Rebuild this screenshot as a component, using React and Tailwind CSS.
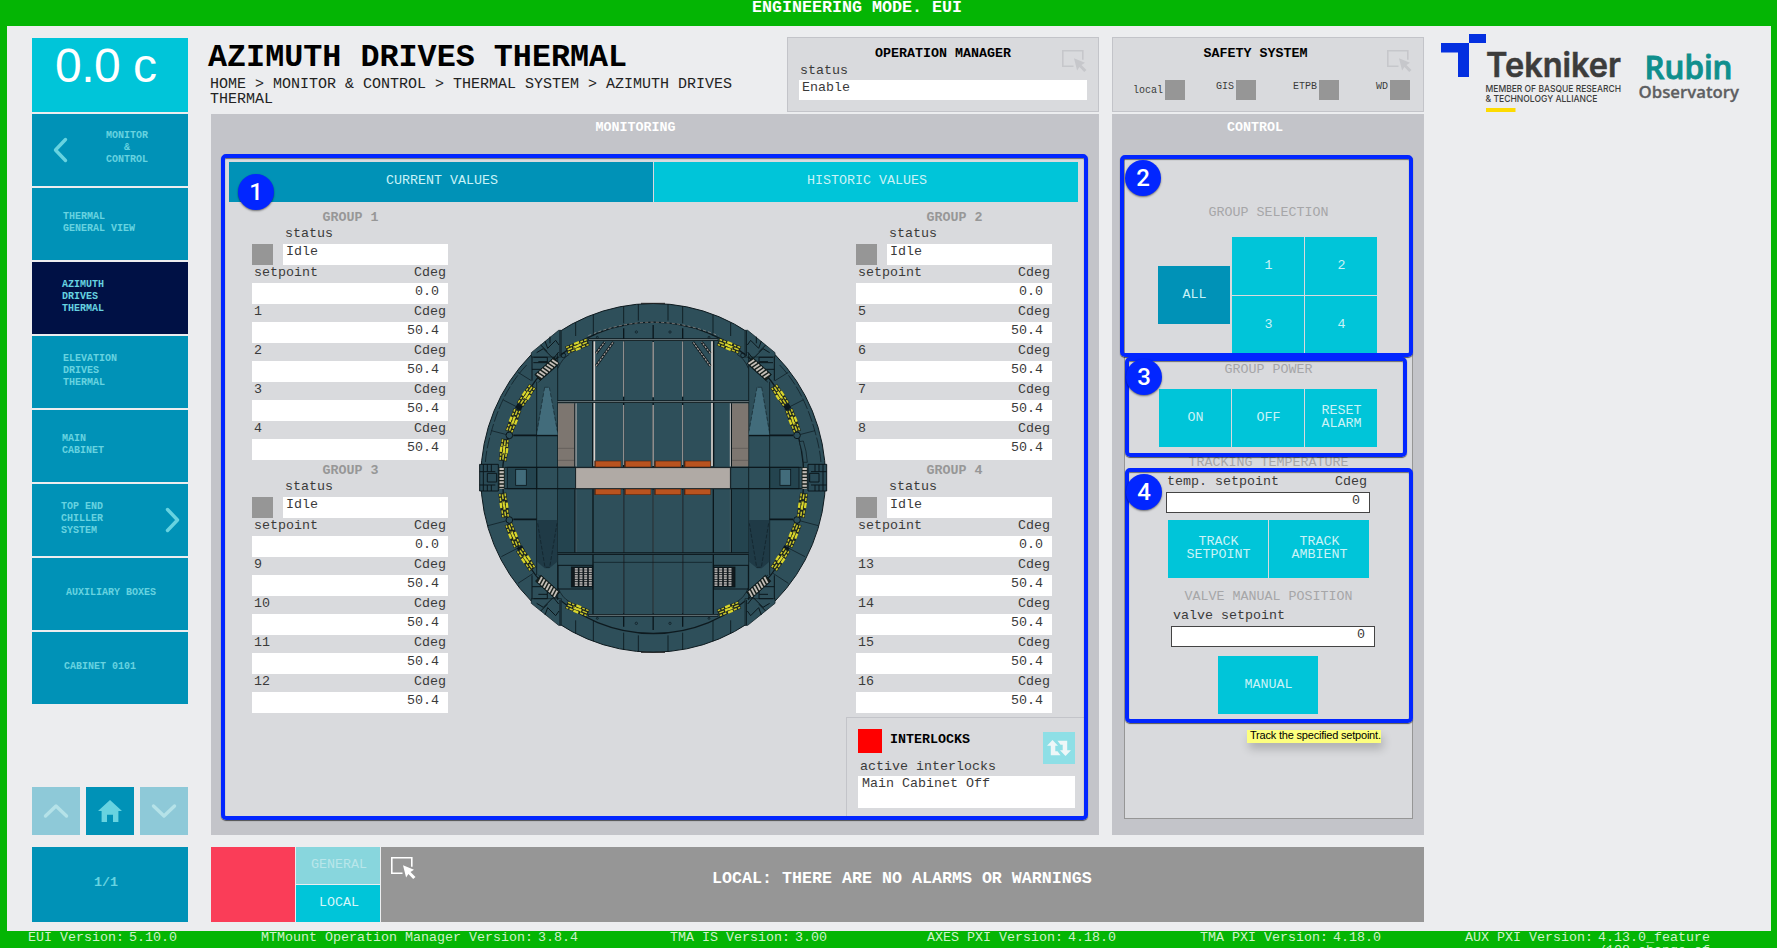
import React from "react";

const mono = "font-['Courier_New','Liberation_Mono',monospace]";

function Label({ children, className = "" }) {
  return <div className={`h-4 text-[13.33px] leading-4 whitespace-pre ${className}`}>{children}</div>;
}

function PointerIcon({ className = "" }) {
  return (
    <svg viewBox="0 0 25 22" className={`h-[22px] w-[25px] ${className}`} fill="none">
      <path d="M11.500 16.200H.8V.8h20v9" stroke="currentColor" strokeWidth="1.6" />
      <path d="M12 8.200l11 4.600-3.500 2.200 5 5-2.300 2-4.800-5-2.300 3.400z" fill="currentColor" />
    </svg>
  );
}

function Chevron({ points, size, className = "" }) {
  return (
    <svg viewBox={size} className={className} fill="none" stroke="currentColor" strokeWidth="3.4" strokeLinecap="round" strokeLinejoin="round">
      <polyline points={points} />
    </svg>
  );
}

const navItems = [
  { lines: ["THERMAL", "GENERAL VIEW"], pad: "pl-[31px]" },
  { lines: ["AZIMUTH", "DRIVES", "THERMAL"], pad: "pl-[30px]", active: true },
  { lines: ["ELEVATION", "DRIVES", "THERMAL"], pad: "pl-[31px]" },
  { lines: ["MAIN", "CABINET"], pad: "pl-[30px]" },
  { lines: ["TOP END", "CHILLER", "SYSTEM"], pad: "pl-[29px]", next: true },
  { lines: ["AUXILIARY BOXES"], pad: "pl-[34px]" },
  { lines: ["CABINET 0101"], pad: "pl-[32px]" },
];

function Sidebar() {
  return (
    <aside className="mt-3 ml-[25px] flex w-[156px] shrink-0 flex-col text-[#67d3e0]">
      <div className="h-[74px] bg-[#00c5d9] pl-[23px] font-['Liberation_Sans',sans-serif] text-[48px] leading-[56px] tracking-[-0.5px] text-white">0.0 c</div>
      <div className="mt-0.5 flex flex-col gap-0.5 text-[10px] leading-3 font-bold">
        <div className="flex h-[72px] items-center bg-[#0092b7]">
          <Chevron size="0 0 15 26" points="12.5,2.5 2.5,13 12.5,23.5" className="-mt-px ml-[21px] h-[26px] w-[15px]" />
          <div className="-mt-1 ml-[35px] w-[48px] text-center">
            MONITOR
            <br />&amp;
            <br />
            CONTROL
          </div>
        </div>
        {navItems.map((n) => (
          <div key={n.lines[0]} className={`flex h-[72px] items-center pb-[3px] ${n.pad} ${n.active ? "bg-[#001145]" : "bg-[#0092b7]"}`}>
            <div>
              {n.lines.map((l) => (
                <div key={l} className="whitespace-pre">{l}</div>
              ))}
            </div>
            {n.next && <Chevron size="0 0 15 26" points="2.5,2.5 12.5,13 2.5,23.5" className="mt-[3px] mr-2 ml-auto h-[26px] w-[15px]" />}
          </div>
        ))}
      </div>
      <div className="mt-[83px] flex gap-1.5">
        <div className="flex h-12 w-12 items-center justify-center bg-[#8ec9d8] text-[#b5e2e8]">
          <Chevron size="0 0 26 16" points="2.5,13 13,3 23.5,13" className="h-4 w-[26px]" />
        </div>
        <div className="flex h-12 w-12 items-center justify-center bg-[#0092b7]">
          <svg viewBox="0 0 24 22" className="h-[22px] w-6" fill="currentColor">
            <path d="M12 0L24 11h-3.6v11h-5.4v-7.2H9V22H3.6V11H0z" />
          </svg>
        </div>
        <div className="flex h-12 w-12 items-center justify-center bg-[#8ec9d8] text-[#b5e2e8]">
          <Chevron size="0 0 26 16" points="2.5,3 13,13 23.5,3" className="h-4 w-[26px]" />
        </div>
      </div>
      <div className="mt-3 h-[75px] bg-[#0092b7] pr-2 text-center text-[13.33px] leading-[72px] font-bold">1/1</div>
    </aside>
  );
}

const lights = [
  { name: "local", cls: "ml-[51px]", txt: "w-[32px] pt-[4px]" },
  { name: "GIS", cls: "ml-[31px]", txt: "w-[20px] pt-0" },
  { name: "ETPB", cls: "ml-[37px]", txt: "w-[26px] pt-0" },
  { name: "WD", cls: "ml-[37px]", txt: "w-[14px] pt-0" },
];

function Header() {
  return (
    <div className="flex h-[75px]">
      <div className="w-[576px] pt-[5px]">
        <h1 className="-ml-[3px] h-8 text-[31.75px] leading-8 font-bold whitespace-pre text-black">AZIMUTH DRIVES THERMAL</h1>
        <div className="mt-[3px] w-[540px] -ml-px text-[15px] leading-[15px] text-[#222]">
          HOME &gt; MONITOR &amp; CONTROL &gt; THERMAL SYSTEM &gt; AZIMUTH DRIVES THERMAL
        </div>
      </div>
      <div className="relative w-[312px] border border-[#c3c4c9] bg-[#d9dadd]">
        <Label className="mt-2 text-center font-bold text-black">OPERATION MANAGER</Label>
        <Label className="mt-[1px] pl-3">status</Label>
        <div className="mx-[11px] mt-[1px] h-5 bg-white pl-[3px] text-[13.33px] leading-4">Enable</div>
        <PointerIcon className="absolute top-3 right-[11px] text-[#c6c7cb]" />
      </div>
      <div className="relative ml-[13px] w-[312px] border border-[#c3c4c9] bg-[#d9dadd]">
        <Label className="mt-2 pr-[25px] text-center font-bold text-black">SAFETY SYSTEM</Label>
        <PointerIcon className="absolute top-3 right-[11px] text-[#c6c7cb]" />
        <div className="mt-[18px] -ml-[31px] flex text-[10px] leading-[14px]">
          {lights.map((l) => (
            <div key={l.name} className={`flex ${l.cls}`}>
              <div className={l.txt}>{l.name}</div>
              <div className="h-5 w-5 bg-[#969696]" />
            </div>
          ))}
        </div>
      </div>
    </div>
  );
}

const fmt = (n) => n.toFixed(1);

function Group({ id, start }) {
  const rows = [["setpoint", 0], [start, 50.4], [start + 1, 50.4], [start + 2, 50.4], [start + 3, 50.4]];
  return (
    <section className="w-[196px]">
      <Label className="pl-px text-center font-bold text-[#979797]">GROUP {id}</Label>
      <Label className="h-[18px] pl-[33px]">status</Label>
      <div className="flex justify-between">
        <div className="h-[21px] w-[21px] bg-[#969696]" />
        <div className="h-[21px] w-[165px] bg-white pl-[3px] text-[13.33px] leading-4">Idle</div>
      </div>
      {rows.map(([name, v]) => (
        <div key={name}>
          <Label className="flex h-[18px] justify-between px-0.5">
            <span>{name}</span>
            <span>Cdeg</span>
          </Label>
          <div className="h-[21px] bg-white pr-[9px] text-right text-[13.33px] leading-[18px]">{fmt(v)}</div>
        </div>
      ))}
    </section>
  );
}

function Drive({ x, y, r, w = 68 }) {
  return (
    <g transform={`translate(${x} ${y}) rotate(${r})`}>
      <rect x={-w / 2} y="-12" width={w} height="24" fill="#1b2520" stroke="none" />
      <path
        d={`M${-w / 2 + 2} -8h9M${-w / 2 + 15} -8h7M${-w / 2 + 4} 0h14M${-w / 2 + 2} 8h7M${-w / 2 + 13} 8h10M${w / 2 - 22} -8h8M${w / 2 - 10} -8h8M${w / 2 - 18} 0h14M${w / 2 - 23} 8h10M${w / 2 - 9} 8h7`}
        stroke="#c9c62c"
        strokeWidth="4.500"
      />
      <path d="M-13 0h26M-7 -9h16M-9 9h16" stroke="#d9d62c" strokeWidth="7" />
      <path d="M-5 -4h6M3 4h6M-11 -2v5" stroke="#1b2520" strokeWidth="2" />
    </g>
  );
}

function Ladder({ x, y, r, w = 76 }) {
  return (
    <g transform={`translate(${x} ${y}) rotate(${r})`}>
      <rect x={-w / 2} y="-12" width={w} height="24" fill="#17201c" />
      {[0, 1, 2, 3, 4, 5, 6].map((i) => (
        <path key={i} d={`M${-w / 2 + 6 + (i * w) / 7.4} -10l5 20`} stroke="#c4beb8" strokeWidth="5.5" />
      ))}
    </g>
  );
}

function HalfMount() {
  return (
    <g stroke="#0b171c" strokeWidth="2.5" fill="none">
      <path d="M184 188L266 121h8v80H184z" fill="#2e4f5a" stroke="#16262c" />
      <path d="M184 940L266 1006h8v-80H184z" fill="#2e4f5a" stroke="#16262c" />
      <path d="M317 98v40M370 75v62M461 48v52M505 42v50M317 1031v-40M370 1054v-62M461 1080v-52M505 1086v-50" />
      <path d="M186 200v72M186 856v72M190 202h42v36h-46M200 188l20-12 30 30 16-20M212 165l20 20M225 153l8 22 24-24 10 14M240 140v20M205 215h26M190 218h42M270 122v76M190 926h42v-36h-46M200 940l20 12 30-30 16 20M212 963l20-20M225 975l8-22 24 24 10-14M205 913h26M270 1006v-76" strokeWidth="3" />
      <path d="M184 272l-40-25M155 358l-55-28M118 436l-54-14M118 690l-64 17M148 772l-54 28M190 850l-46 30" strokeWidth="2" />
      <path d="M170 225Q98 300 64 425Q48 480 46 520" strokeWidth="2" strokeDasharray="34 7" />
      <path d="M200 275V855M263 190V930" />
      <path d="M205 277l57-50M205 855l57 45M264 235q12-30 34-42M264 893q12 30 34 42" strokeWidth="2" />
      <path d="M130 436H263M130 688H200" strokeWidth="5" />
      <path d="M224 292h14l25 142H201z" fill="#426c7b" stroke="none" />
      <path d="M224 292h14M224 292l-23 130M238 292l24 130" strokeWidth="1.500" strokeDasharray="12 6" />
      <path d="M201 690h61v125l-24 20h-14l-23-20z" fill="#1f3a46" stroke="none" />
      <path d="M203 700l22 132h14l22-132" strokeWidth="1.500" strokeDasharray="12 5" />
      <rect x="264" y="340" width="50" height="190" fill="#7d7670" stroke="none" />
      <path d="M264 475h50M264 511h50" strokeWidth="1.5" stroke="#4f4a47" />
      <rect x="264" y="598" width="50" height="192" fill="#24444f" stroke="none" />
      <path d="M315 340v190M315 598v190" strokeWidth="4" />
      <path d="M318 340v190" stroke="#c9c5c2" strokeWidth="3" />
      <path d="M318 598v190" stroke="#57676c" strokeWidth="2" />
      <path d="M368 152V530M461 115V532M461 598V1010M369 598V975" strokeWidth="4" />
      <path d="M373 154V528" stroke="#d8d0cb" strokeWidth="5" />
      <path d="M461 154V320M461 345V525" stroke="#a8a5a3" strokeWidth="3" />
      <path d="M461 600V970" stroke="#4c5f66" strokeWidth="1.5" />
      <path d="M378 228l52-72M378 190l26-34" strokeWidth="8" />
      <path d="M378 228l52-72M378 190l26-34" stroke="#a7a09c" strokeWidth="3.500" strokeDasharray="7 3" />
      <rect x="264" y="826" width="104" height="71" strokeWidth="3" />
      <rect x="304" y="831" width="64" height="60" fill="#11191d" />
      <path d="M319 834v55M333 834v55M347 834v55M361 834v55" stroke="#a9a7a6" strokeWidth="9" strokeDasharray="5 2" />
      <path d="M112 532h88v64h-88z" fill="#24444f" />
      <path d="M200 532h117v64H200z" />
      <rect x="137" y="538" width="32" height="48" fill="#426c7b" />
      <path d="M29 523h56v80H29zM29 545h47M29 585h47M40 523v80M52 523v22M64 523v22M52 585v18M64 585v18M52 550h28v26H52z" fill="#2a4a56" strokeWidth="3" />
      <rect x="87" y="532" width="17" height="64" fill="#17201c" stroke="none" />
      <path d="M95 534v62" stroke="#c4beb8" strokeWidth="13" strokeDasharray="6 4" />
      <circle cx="118" cy="436" r="10" strokeWidth="3" fill="#2e4f5a" />
      <circle cx="118" cy="690" r="10" strokeWidth="3" fill="#2e4f5a" />
      <circle cx="280" cy="196" r="7" />
      <circle cx="499" cy="126" r="3.5" strokeWidth="2" />
      <circle cx="499" cy="1000" r="3.5" strokeWidth="2" />
      <circle cx="382" cy="142" r="3" strokeWidth="2" />
      <circle cx="382" cy="985" r="3" strokeWidth="2" />
      <path d="M151 344l-8 14M148 770l8 14" strokeWidth="18" />
      <Drive x={322} y={168} r={-21} w={70} />
      <Drive x={169} y={316} r={-56} w={68} />
      <Drive x={130} y={392} r={-69} w={72} />
      <Drive x={102} y={646} r={82} w={74} />
      <Drive x={129} y={736} r={68} w={74} />
      <Drive x={168} y={808} r={56} w={72} />
      <Drive x={322} y={957} r={22} w={70} />
      <Ladder x={231} y={237} r={-42} />
      <Ladder x={233} y={890} r={42} />
    </g>
  );
}

function Mount() {
  return (
    <svg viewBox="0 0 1110 1110" className="mt-20 ml-[22px] h-[370px] w-[370px] shrink-0">
      <ellipse cx="549.5" cy="563.5" rx="517" ry="523" fill="#2e4f5a" stroke="#0e1a1f" strokeWidth="3" />
      <ellipse cx="549.5" cy="563.5" rx="452" ry="467" fill="none" stroke="#0e1a1f" strokeWidth="4" />
      <path d="M355 137Q549 56 745 137" fill="none" stroke="#a7a09c" strokeWidth="2" strokeDasharray="9 7" />
      <HalfMount />
      <g transform="translate(1099 0) scale(-1 1)">
        <HalfMount />
      </g>
      <Drive x={102} y={480} r={-83} w={66} />
      <path d="M988 455q10 30 12 62h12q-2-34-12-64z" fill="#2e4f5a" stroke="#0e1a1f" strokeWidth="2" />
      <g fill="none" stroke="#0b171c">
        <path d="M549.5 105V532M549.5 598V1020" strokeWidth="4" />
        <path d="M549.5 156V322M549.5 345V528" stroke="#a8a5a3" strokeWidth="4" />
        <path d="M549.5 600V970" stroke="#55676d" strokeWidth="2" />
        <path d="M355 149H745M263 335H836M263 791H836M355 976H745" strokeWidth="8" />
        <path d="M357 149H743M263 335H836M357 976H743" stroke="#6f7d80" strokeWidth="3" />
        <path d="M263 791H836" stroke="#3b555e" strokeWidth="2" />
        <path d="M370 817H727" strokeWidth="2" />
        <path d="M104 532H995M104 596H995" strokeWidth="3" />
      </g>
      <rect x="317" y="533" width="464" height="63" fill="#b0aaa5" stroke="#0b171c" strokeWidth="2.5" />
      {[377, 467, 557, 646].map((x) => (
        <g key={x}>
          <rect x={x - 4} y="512" width="80" height="20" fill="#4a2716" />
          <rect x={x} y="514" width="75" height="16" fill="#b9531f" />
          <rect x={x - 4} y="597" width="80" height="18" fill="#4a2716" />
          <rect x={x} y="598" width="75" height="15" fill="#b9531f" />
        </g>
      ))}
      <path d="M513 40h72M513 1087h72" stroke="#222" strokeWidth="3" />
    </svg>
  );
}

function Interlocks() {
  return (
    <section className="mt-px ml-[624px] flex-1 border-t border-l border-[#c3c4c9] pt-[11px] pl-[11px]">
      <div className="flex w-[217px]">
        <div className="h-6 w-6 bg-[#ff0000]" />
        <Label className="mt-[3px] ml-2 font-bold text-black">INTERLOCKS</Label>
        <div className="mt-[3px] ml-auto flex h-8 w-8 items-center justify-center bg-[#8edfe6]">
          <svg viewBox="0 0 24 16" className="h-4 w-6" fill="#eef7f8">
            <path d="M5.500 0l5.500 5.800H8.300v5.500h2.200l3 3.900H3.800V5.800H0zM18.500 16l-5.500-5.800h2.700V4.700h-2.200l-3-3.900h9.700v9.400H24z" />
          </svg>
        </div>
      </div>
      <Label className="-mt-[5px] pl-0.5">active interlocks</Label>
      <div className="mt-px h-8 w-[217px] bg-white pl-1 text-[13.33px] leading-4">Main Cabinet Off</div>
    </section>
  );
}

function Badge({ n, className }) {
  return (
    <div className={`absolute flex h-9 w-9 items-center justify-center rounded-full bg-[#0226ff] pb-px font-['Roboto',sans-serif] text-[24px] leading-none font-medium text-white shadow-[0_1px_2px_rgba(0,0,0,0.5)] ${className}`}>
      {n}
    </div>
  );
}

function Frame({ className }) {
  return <div className={`absolute rounded-[5px] border-4 border-[#0226ff] shadow-[0_1px_1px_rgba(0,0,0,0.6),inset_0_1px_1px_rgba(0,0,0,0.5)] ${className}`} />;
}

function Monitoring() {
  return (
    <section className="relative h-[721px] w-[888px] bg-[#c3c4c9] pt-[5px]">
      <Label className="pt-px pr-[39px] text-center font-bold text-white">MONITORING</Label>
      <div className="mt-5 ml-[11px] flex h-[664px] w-[865px] flex-col bg-[#d9dadd] pt-[7px]">
        <div className="ml-[7px] flex h-10 shrink-0 gap-px text-center text-[13.33px] leading-[38px] text-[#c9f3f7]">
          <div className="w-[424px] bg-[#0092b7] pl-0.5">CURRENT VALUES</div>
          <div className="w-[424px] bg-[#00c5d9] pl-0.5">HISTORIC VALUES</div>
        </div>
        <div className="mt-2 flex pl-[30px]">
          <div className="flex h-[506px] flex-col gap-[3px]">
            <Group id={1} start={1} />
            <Group id={3} start={9} />
          </div>
          <Mount />
          <div className="ml-4 flex h-[506px] flex-col gap-[3px]">
            <Group id={2} start={5} />
            <Group id={4} start={13} />
          </div>
        </div>
        <Interlocks />
      </div>
      <Frame className="top-10 left-[10px] h-[666px] w-[867px]" />
      <Badge n="1" className="top-[60px] left-[27px]" />
    </section>
  );
}

function Btn({ children, className = "" }) {
  return (
    <div className={`flex h-[58px] items-center justify-center pb-[2px] pl-px text-center text-[13.33px] leading-[13px] text-[#c9f3f7] ${className}`}>
      <div>{children}</div>
    </div>
  );
}

function Control() {
  const cy = "bg-[#00c5d9]";
  const head = "text-center text-[#a6a6a8]";
  return (
    <section className="relative ml-[13px] h-[721px] w-[312px] bg-[#c3c4c9] pt-[5px]">
      <Label className="pt-px pr-[26px] text-center font-bold text-white">CONTROL</Label>
      <div className="mt-[23px] ml-3 h-[661px] w-[289px] border border-[#969696] bg-[#d9dadd] pt-[46px]">
        <Label className={head}>GROUP SELECTION</Label>
        <div className="mt-4 flex gap-0.5 pl-[33px]">
          <Btn className="mt-[29px] w-[72px] bg-[#0092b7]">ALL</Btn>
          <div className="grid grid-cols-[72px_72px] gap-px">
            {[1, 2, 3, 4].map((n) => (
              <Btn key={n} className={cy}>{n}</Btn>
            ))}
          </div>
        </div>
        <Label className={`mt-2 ${head}`}>GROUP POWER</Label>
        <div className="mt-[11px] flex gap-px pl-[34px]">
          <Btn className={`w-[72px] ${cy}`}>ON</Btn>
          <Btn className={`w-[72px] ${cy}`}>OFF</Btn>
          <Btn className={`w-[72px] ${cy}`}>RESET<br />ALARM</Btn>
        </div>
        <Label className={`mt-2 ${head}`}>TRACKING TEMPERATURE</Label>
        <Label className="mt-[3px] ml-[42px] flex w-[200px] justify-between">
          <span>temp. setpoint</span>
          <span>Cdeg</span>
        </Label>
        <div className="mt-0.5 ml-[41px] h-[21px] w-[204px] border border-[#444] bg-white pr-[9px] text-right text-[13.33px] leading-4">0</div>
        <div className="mt-[7px] flex gap-px pl-[43px]">
          <Btn className={`w-[100px] ${cy}`}>TRACK<br />SETPOINT</Btn>
          <Btn className={`w-[100px] ${cy}`}>TRACK<br />AMBIENT</Btn>
        </div>
        <Label className={`mt-[11px] ${head}`}>VALVE MANUAL POSITION</Label>
        <Label className="mt-[3px] ml-12">valve setpoint</Label>
        <div className="mt-0.5 ml-[46px] h-[21px] w-[204px] border border-[#444] bg-white pr-[9px] text-right text-[13.33px] leading-4">0</div>
        <Btn className={`mt-[9px] ml-[93px] w-[100px] ${cy}`}>MANUAL</Btn>
      </div>
      <Frame className="top-[41px] left-2 h-[202px] w-[293px]" />
      <Frame className="top-[243px] left-[13px] h-[100px] w-[282px]" />
      <Frame className="top-[354px] left-[13px] h-[255px] w-[288px]" />
      <Badge n="2" className="top-[46px] left-[13px]" />
      <Badge n="3" className="top-[245px] left-[14px]" />
      <Badge n="4" className="top-[360px] left-[14px]" />
      <div className="absolute top-[616px] left-[135px] h-[13px] w-[134px] bg-[#fdff7f] pl-[3px] font-['Liberation_Sans',sans-serif] text-[11px] leading-[11px] tracking-[-0.2px] whitespace-nowrap text-black shadow-[2px_6px_10px_rgba(0,0,0,0.2)]">
        Track the specified setpoint.
      </div>
    </section>
  );
}

function AlarmBar() {
  return (
    <div className="mt-3 flex h-[75px] gap-px">
      <div className="w-[84px] bg-[#fa3d58]" />
      <div className="flex w-[84px] flex-col gap-px text-center text-[13.33px]">
        <div className="h-[37px] bg-[#88d6dd] pl-0.5 leading-[35px] text-[#b9e6ea]">GENERAL</div>
        <div className="h-[37px] bg-[#00c5d9] pl-0.5 leading-[35px] text-[#d5f6f9]">LOCAL</div>
      </div>
      <div className="flex flex-1 bg-[#969696]">
        <PointerIcon className="mt-2.5 ml-2.5 text-white" />
        <div className="ml-[296px] text-[16.67px] leading-[64px] font-bold whitespace-pre text-white">LOCAL: THERE ARE NO ALARMS OR WARNINGS</div>
      </div>
    </div>
  );
}

function Logos() {
  return (
    <svg viewBox="0 0 320 90" className="mt-0.5 ml-1.5 h-[90px] w-[320px] shrink-0">
      <path d="M39 6h17v9H39zM11 15h28v34H28V24.500H11z" fill="#0430e0" />
      <text x="56" y="49" textLength="135" lengthAdjust="spacingAndGlyphs" fontSize="33.500" fontWeight="600" fill="#3c3c3b" stroke="#3c3c3b" strokeWidth="0.5" className="font-['Inter',sans-serif]">Tekniker</text>
      <text x="55.500" y="64" textLength="135.500" lengthAdjust="spacingAndGlyphs" fontSize="9.600" fontWeight="500" fill="#3c3c3b" className="font-['Inter',sans-serif]">MEMBER OF BASQUE RESEARCH</text>
      <text x="55.500" y="74" textLength="112" lengthAdjust="spacingAndGlyphs" fontSize="9.600" fontWeight="500" fill="#3c3c3b" className="font-['Inter',sans-serif]">&amp; TECHNOLOGY ALLIANCE</text>
      <path d="M56 80h29.500v4H56z" fill="#fddb00" />
      <text x="214.500" y="50.500" textLength="88" lengthAdjust="spacingAndGlyphs" fontSize="32" fontWeight="600" fill="#0f8f8d" stroke="#0f8f8d" strokeWidth="0.9" className="font-['Open_Sans','Noto_Sans',sans-serif]">Rubin</text>
      <text x="208.500" y="70" textLength="100.500" lengthAdjust="spacingAndGlyphs" fontSize="17" fontWeight="600" fill="#5e5f62" stroke="#5e5f62" strokeWidth="0.3" className="font-['Open_Sans','Noto_Sans',sans-serif]">Observatory</text>
    </svg>
  );
}

const versions = [
  ["EUI Version:", "5.10.0", "pl-[28px] w-[261px]"],
  ["MTMount Operation Manager Version:", "3.8.4", "w-[409px]"],
  ["TMA IS Version:", "3.00", "w-[257px]"],
  ["AXES PXI Version:", "4.18.0", "w-[273px]"],
  ["TMA PXI Version:", "4.18.0", "w-[265px]"],
  ["AUX PXI Version:", "4.13.0_feature\n/108_change_of", "w-[260px]"],
];

export default function App() {
  return (
    <div className={`flex h-[948px] w-[1777px] flex-col overflow-hidden bg-[#04b504] text-[#3a3a3a] ${mono}`}>
      <div className="h-[26px] shrink-0 pr-[63px] text-center text-[16.67px] leading-4 font-bold text-white">ENGINEERING MODE. EUI</div>
      <div className="ml-[7px] flex h-[905px] w-[1764px] shrink-0 bg-[#ecedef]">
        <Sidebar />
        <main className="mt-[11px] ml-[23px] w-[1213px] shrink-0">
          <Header />
          <div className="mt-0.5 flex">
            <Monitoring />
            <Control />
          </div>
          <AlarmBar />
        </main>
        <Logos />
      </div>
      <footer className="flex h-[17px] shrink-0 text-[13.33px] leading-[13px] text-[#cdf2c9]">
        {versions.map(([k, v, w]) => (
          <div key={k} className={`flex shrink-0 gap-[5px] whitespace-pre ${w}`}>
            <span>{k}</span>
            <span>{v}</span>
          </div>
        ))}
      </footer>
    </div>
  );
}
